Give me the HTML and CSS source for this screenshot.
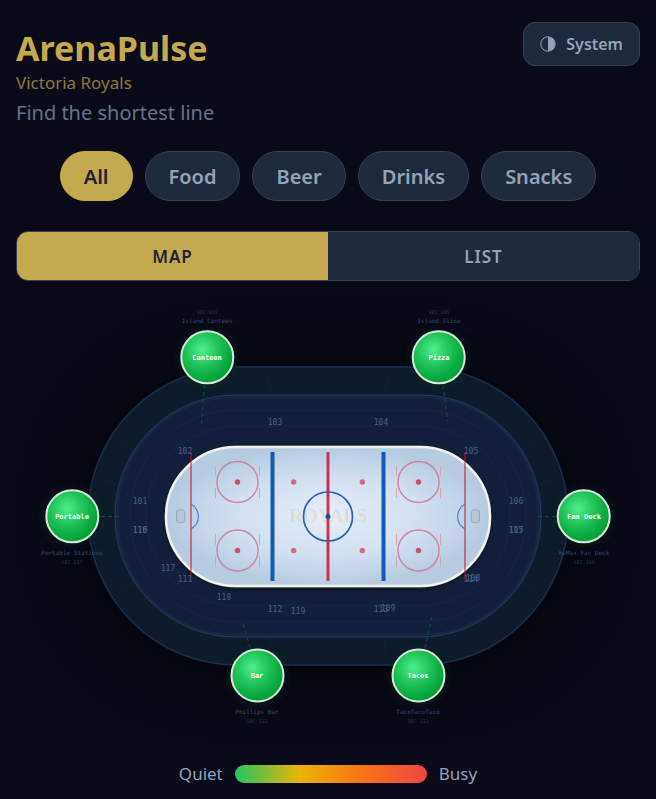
FILE: index.html
```html
<!DOCTYPE html>
<html lang="en">
<head>
    <meta charset="UTF-8">
    <meta name="viewport" content="width=device-width, initial-scale=1.0">
    <title>ArenaPulse</title>
    <link rel="stylesheet" href="styles.css">
</head>
<body>
    <header class="header">
        <div class="brand">
            <h1>ArenaPulse</h1>
            <p class="team">Victoria Royals</p>
            <p class="tagline">Find the shortest line</p>
        </div>
        <button class="theme-button" type="button">
            <svg class="theme-icon" viewBox="0 0 16 16" aria-hidden="true">
                <circle cx="8" cy="8" r="7.2" fill="none" stroke="currentColor" />
                <path d="M8 1a7 7 0 0 1 0 14z" fill="currentColor" />
            </svg>
            <span>System</span>
        </button>
    </header>

    <nav class="filters">
        <button class="filter active" type="button">All</button>
        <button class="filter" type="button">Food</button>
        <button class="filter" type="button">Beer</button>
        <button class="filter" type="button">Drinks</button>
        <button class="filter" type="button">Snacks</button>
    </nav>

    <div class="view-toggle">
        <button class="view active" type="button">MAP</button>
        <button class="view" type="button">LIST</button>
    </div>

    <main class="map">
        <svg class="arena" viewBox="16 297 624 438" role="img" aria-label="Arena map">
            <defs>
                <radialGradient id="ice" cx="50%" cy="50%" r="50%">
                    <stop offset="0" stop-color="#e6eef9" />
                    <stop offset="0.6" stop-color="#d0dff0" />
                    <stop offset="1" stop-color="#b6cbe0" />
                </radialGradient>
                <radialGradient id="green" cx="40%" cy="35%" r="60%">
                    <stop offset="0" stop-color="#4ef08a" />
                    <stop offset="0.5" stop-color="#22c55a" />
                    <stop offset="1" stop-color="#02a338" />
                </radialGradient>
                <filter id="iceShadow" x="-10%" y="-10%" width="120%" height="120%">
                    <feDropShadow dx="0" dy="1" stdDeviation="2" flood-color="#000" flood-opacity="0.5" />
                </filter>
            </defs>

            <!-- Stands -->
            <g class="stands">
                <rect x="88" y="367" width="480" height="298" rx="149" fill="#0d1b2a" stroke="#1b2f4d" stroke-width="1.5" />
                <rect x="115" y="395" width="426" height="242" rx="121" fill="#131f3a" stroke="#1f3355" stroke-width="1.5" />
                <rect x="117" y="397" width="422" height="238" rx="119" fill="none" stroke="#1b2b4a" />
                <rect x="130" y="410" width="396" height="212" rx="106" fill="none" stroke="#182644" />
                <rect x="146" y="426" width="364" height="180" rx="90" fill="none" stroke="#182644" />
            </g>
            <g stroke="#112235">
                <path d="M328 370v21M266 375l6 20M389 375l-6 20M269 647l3-9M387 655l-3-16" />
                <path d="M120 443l13 6M97 479l20 5M97 555l18-5M120 590l12-6M158 620l7-6M208 643l5-8" />
                <path d="M536 443l-13 6M559 479l-20 5M559 555l-18-5M536 590l-12-6M498 620l-7-6M448 643l-5-8" />
            </g>

            <!-- Ice surface -->
            <rect x="166" y="447" width="324" height="139" rx="70" fill="url(#ice)" stroke="#f3f3ec" stroke-width="2.5" filter="url(#iceShadow)" />
            <text class="logo" x="328" y="522">ROYALS</text>
            <g stroke="#c8102e" stroke-opacity="0.5" stroke-width="2">
                <path d="M191 452v129M465 452v129" />
            </g>
            <path d="M328 452v129" stroke="#cb3450" stroke-width="3" />
            <path d="M272.5 452v129M383.5 452v129" stroke="#1558b5" stroke-width="4" />
            <circle cx="328" cy="516.5" r="24.5" fill="none" stroke="#2961b8" stroke-width="1.7" />
            <circle cx="328" cy="516.5" r="2.5" fill="#174fa8" />
            <g fill="none" stroke="#cf8298" stroke-width="1.4">
                <circle cx="237.5" cy="482" r="20.5" />
                <circle cx="237.5" cy="550.5" r="20.5" />
                <circle cx="418.5" cy="482" r="20.5" />
                <circle cx="418.5" cy="550.5" r="20.5" />
            </g>
            <path d="M215.5 466v10m0 12v10m0 36v11m0 11v11M259.5 466v10m0 12v10m0 36v11m0 11v11M396.5 466v10m0 12v10m0 36v11m0 11v11M440.5 466v10m0 12v10m0 36v11m0 11v11" stroke="#d5a3b5" />
            <g fill="#c8506a">
                <circle cx="237.5" cy="482" r="2.7" />
                <circle cx="237.5" cy="550.5" r="2.7" />
                <circle cx="418.5" cy="482" r="2.7" />
                <circle cx="418.5" cy="550.5" r="2.7" />
            </g>
            <g fill="#cd6c84">
                <circle cx="293.7" cy="482" r="2.7" />
                <circle cx="293.7" cy="550.5" r="2.7" />
                <circle cx="362.3" cy="482" r="2.7" />
                <circle cx="362.3" cy="550.5" r="2.7" />
            </g>
            <path d="M191 504a14.3 14.3 0 0 1 0 25M465 504a14.3 14.3 0 0 0 0 25" fill="none" stroke="#4a80ca" stroke-width="1.2" />
            <g fill="#888" fill-opacity="0.1" stroke="#a0a8b0">
                <rect x="176.5" y="510" width="8" height="12.5" rx="2" />
                <rect x="471.5" y="510" width="8" height="12.5" rx="2" />
            </g>

            <!-- Section numbers -->
            <g class="section">
                <text x="140" y="504">101</text>
                <text x="185" y="454">102</text>
                <text x="275" y="425">103</text>
                <text x="381" y="425">104</text>
                <text x="471" y="454">105</text>
                <text x="516" y="504">106</text>
                <text x="516" y="533">107</text>
                <text x="473" y="581">108</text>
                <text x="388" y="611">109</text>
                <text x="140" y="533">110</text>
                <text x="185" y="582">111</text>
                <text x="275" y="612">112</text>
                <text x="381" y="612">113</text>
                <text x="471" y="582">114</text>
                <text x="516" y="533">115</text>
                <text x="140" y="533">116</text>
                <text x="168" y="571">117</text>
                <text x="224" y="600">118</text>
                <text x="298" y="614">119</text>
            </g>

            <!-- Stall connectors -->
            <path d="M204.5 385l-3 39M443 385l4.5 36M101 516.5h18M556 516.5h-19M250 648l-7-25M425 648l7-31" stroke="#174b40" stroke-dasharray="4 3" />

            <!-- Stalls -->
            <g class="stall">
                <circle cx="207.3" cy="357.3" r="26" />
                <text class="stall-name" x="207" y="360">Canteen</text>
                <text class="stall-full" x="207" y="323">Island Canteen</text>
                <text class="stall-sec" x="207" y="314">SEC 101</text>
            </g>
            <g class="stall">
                <circle cx="438.7" cy="357.3" r="26" />
                <text class="stall-name" x="439" y="360">Pizza</text>
                <text class="stall-full" x="439" y="323">Island Slice</text>
                <text class="stall-sec" x="439" y="314">SEC 105</text>
            </g>
            <g class="stall">
                <circle cx="72.3" cy="516.3" r="26" />
                <text class="stall-name" x="72" y="519">Portable</text>
                <text class="stall-full" x="72" y="555">Portable Stations</text>
                <text class="stall-sec" x="72" y="564">SEC 117</text>
            </g>
            <g class="stall">
                <circle cx="583.7" cy="516.3" r="26" />
                <text class="stall-name" x="584" y="519">Fan Deck</text>
                <text class="stall-full" x="584" y="555">ReMax Fan Deck</text>
                <text class="stall-sec" x="584" y="564">SEC 108</text>
            </g>
            <g class="stall">
                <circle cx="257.5" cy="675.5" r="26" />
                <text class="stall-name" x="257" y="678">Bar</text>
                <text class="stall-full" x="257" y="714">Phillips Bar</text>
                <text class="stall-sec" x="257" y="723">SEC 112</text>
            </g>
            <g class="stall">
                <circle cx="418.5" cy="675.5" r="26" />
                <text class="stall-name" x="418" y="678">Tacos</text>
                <text class="stall-full" x="418" y="714">TacoTacoTaco</text>
                <text class="stall-sec" x="418" y="723">SEC 113</text>
            </g>
        </svg>
    </main>

    <div class="legend">
        <span>Quiet</span>
        <div class="legend-bar"></div>
        <span>Busy</span>
    </div>
</body>
</html>
```
FILE: styles.css
```css
* {
    box-sizing: border-box;
}

body {
    margin: 0;
    padding: 22px 16px 0;
    background-color: #0a0a18;
    color: #94a3b8;
    font-family: "Segoe UI", "Noto Sans", sans-serif;
    font-size: 17px;
}

button {
    font-family: inherit;
    font-weight: 600;
    color: #94a3b8;
    background-color: #1e293b;
    border: 1px solid #334155;
    cursor: pointer;
}

.header {
    display: flex;
    justify-content: space-between;
    align-items: flex-start;
}

.brand h1 {
    margin: 3px 0 0;
    font-size: 34px;
    font-weight: 700;
    line-height: 47px;
    color: #c5a94e;
}

.brand p {
    margin: 0;
}

.team {
    font-size: 17px;
    line-height: 22px;
    color: #8d7a3e;
}

.tagline {
    font-size: 20px;
    line-height: 38px;
    color: #64748b;
}

.theme-button {
    display: flex;
    align-items: center;
    gap: 10px;
    height: 44px;
    padding: 0 16px;
    border-radius: 12px;
    font-size: 16px;
}

.theme-icon {
    width: 16px;
    height: 16px;
}

.filters {
    display: flex;
    justify-content: center;
    gap: 12px;
    margin-top: 19px;
}

.filter {
    height: 50px;
    padding: 0 23px;
    border-radius: 25px;
    font-size: 20px;
}

.active {
    color: #1a2238;
    background-color: #c5a94e;
}

.filter.active {
    border-color: #c5a94e;
}

.view-toggle {
    display: flex;
    margin-top: 30px;
    border: 1px solid #334155;
    border-radius: 12px;
    overflow: hidden;
}

.view {
    flex: 1;
    height: 48px;
    border: none;
    font-size: 17px;
    letter-spacing: 1px;
}

.map {
    margin-top: 16px;
}

.arena {
    display: block;
    width: 100%;
    overflow: visible;
}

.arena text {
    font-family: "DejaVu Sans Mono", monospace;
    text-anchor: middle;
}

.stands {
    filter: drop-shadow(0 4px 30px rgba(0, 0, 0, 0.8));
}

.arena .logo {
    font-family: "Liberation Serif", serif;
    font-size: 19px;
    font-weight: bold;
    fill: #c5a94e;
    opacity: 0.18;
}

.section {
    font-size: 8px;
    fill: #446190;
}

.stall circle {
    fill: url(#green);
    stroke: #d9e6dc;
    stroke-width: 2px;
    filter: drop-shadow(0 1px 4px rgba(10, 50, 30, 0.7));
}

.stall-name {
    font-size: 7px;
    font-weight: bold;
    fill: #fff;
}

.stall-full {
    font-size: 6px;
    fill: #334b72;
}

.stall-sec {
    font-size: 5px;
    fill: #25375a;
}

.legend {
    display: flex;
    justify-content: center;
    align-items: center;
    gap: 12px;
    margin-top: 26px;
    line-height: 26px;
}

.legend-bar {
    width: 192px;
    height: 18px;
    border-radius: 9px;
    background: linear-gradient(to right, #22c55e, #eab308, #f97316, #ef4444);
}
```
